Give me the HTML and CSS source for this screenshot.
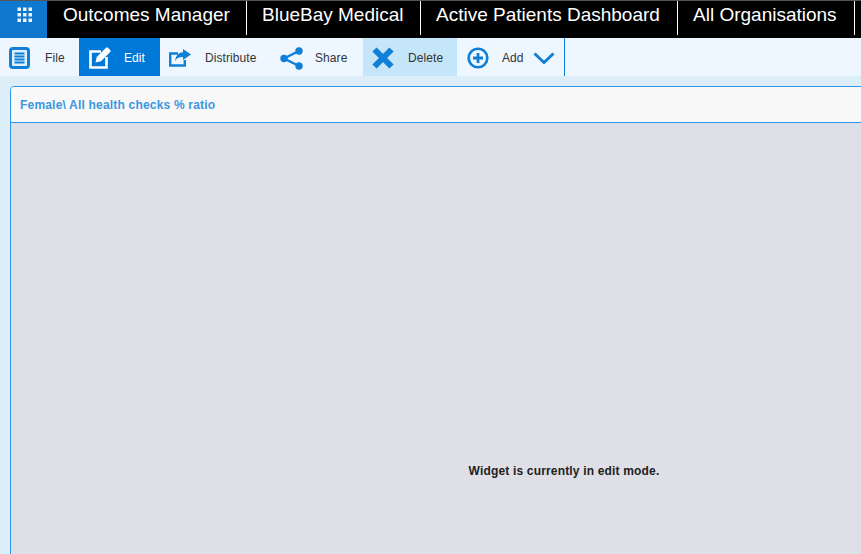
FILE: index.html
```html
<!DOCTYPE html>
<html lang="en">
<head>
<meta charset="utf-8">
<title>Outcomes Manager</title>
<link rel="stylesheet" href="styles.css">
</head>
<body>
<header class="topbar">
  <button class="apps" aria-label="Apps">
    <svg width="15" height="15" viewBox="0 0 15 15"><g fill="#fff" fill-opacity=".92"><rect x="0.500" y="0.500" width="3.500" height="3.500"/><rect x="6" y="0.500" width="3.500" height="3.500"/><rect x="11.500" y="0.500" width="3.500" height="3.500"/><rect x="0.500" y="6" width="3.500" height="3.500"/><rect x="6" y="6" width="3.500" height="3.500"/><rect x="11.500" y="6" width="3.500" height="3.500"/><rect x="0.500" y="11.500" width="3.500" height="3.500"/><rect x="6" y="11.500" width="3.500" height="3.500"/><rect x="11.500" y="11.500" width="3.500" height="3.500"/></g></svg>
  </button>
  <div class="crumb crumb-app">Outcomes Manager</div>
  <div class="crumb crumb-org">BlueBay Medical</div>
  <div class="crumb crumb-dash">Active Patients Dashboard</div>
  <div class="crumb crumb-all">All Organisations</div>
</header>
<nav class="toolbar">
  <div class="tool tool-file">
    <svg class="ico" width="21" height="22" viewBox="0 0 21 22"><rect x="1.500" y="1.500" width="18" height="19" rx="2.500" fill="#dff0fc" stroke="#0f7fd8" stroke-width="3"/><path d="M5.500 6.500h10M5.500 9.500h10M5.500 12.500h10M5.500 15.500h10" stroke="#0f7fd8" stroke-width="2"/></svg>
    <span>File</span>
  </div>
  <div class="tool tool-edit">
    <svg class="ico" width="22" height="22" viewBox="0 0 22 22"><path d="M12 4.500H1.500v16h16V10" fill="none" stroke="#fff" stroke-width="2.600"/><path d="M6.500 15.500l1.200-5.500L17 .8a1.500 1.500 0 0 1 2 0l2.200 2.200a1.500 1.500 0 0 1 0 2L12 14.300z" fill="#fff"/></svg>
    <span>Edit</span>
  </div>
  <div class="tool tool-dist">
    <svg class="ico" width="22" height="18" viewBox="0 0 22 18"><path d="M9 4.500H1.200v12h14.600V11" fill="none" stroke="#0f7fd8" stroke-width="2.400"/><path d="M14 0l8 5.500-8 5.500V8c-4 0-6.500 1-8 4.500C6.500 7 9.500 3.500 14 3.300z" fill="#0f7fd8"/></svg>
    <span>Distribute</span>
  </div>
  <div class="tool tool-share">
    <svg class="ico" width="23" height="23" viewBox="0 0 23 23"><path d="M19 4L4 11.500 19 19" fill="none" stroke="#0f7fd8" stroke-width="2.400"/><circle cx="19" cy="4" r="3.700" fill="#0f7fd8"/><circle cx="4" cy="11.500" r="3.700" fill="#0f7fd8"/><circle cx="19" cy="19" r="3.700" fill="#0f7fd8"/></svg>
    <span>Share</span>
  </div>
  <div class="tool tool-del">
    <svg class="ico" width="22" height="22" viewBox="0 0 22 22"><path d="M2.500 2.500l17 17M19.500 2.500l-17 17" stroke="#0f7fd8" stroke-width="6" fill="none"/></svg>
    <span>Delete</span>
  </div>
  <div class="tool tool-add">
    <svg class="ico" width="22" height="22" viewBox="0 0 22 22"><circle cx="11" cy="11" r="9.300" fill="none" stroke="#0f7fd8" stroke-width="2.600"/><path d="M11 6v10M6 11h10" stroke="#0f7fd8" stroke-width="2.800"/></svg>
    <span>Add</span>
    <svg class="chev" width="22" height="13" viewBox="0 0 22 13"><path d="M1.500 1.500L11 10.500 20.500 1.500" fill="none" stroke="#0f7fd8" stroke-width="3"/></svg>
  </div>
</nav>
<main class="content">
  <section class="card">
    <h2 class="card-head">Female\ All health checks % ratio</h2>
    <div class="card-body">Widget is currently in edit mode.</div>
  </section>
</main>
</body>
</html>
```

FILE: styles.css
```css
html, body {
  margin: 0;
  padding: 0;
  height: 100%;
  overflow: hidden;
  font-family: "Liberation Sans", Arial, sans-serif;
  background: #dceef7;
}
.topbar {
  display: flex;
  height: 37px;
  background: #000;
  border-top: 1px solid #555;
}
.apps {
  width: 47px;
  height: 37px;
  border: 0;
  padding: 6px 0 0 17px;
  background: #0e78cf;
  display: flex;
  justify-content: flex-start;
  align-items: flex-start;
  flex: none;
}
.crumb {
  height: 34px;
  line-height: 27px;
  color: #fff;
  font-size: 19px;
  border-right: 1px solid #fff;
  box-sizing: border-box;
  padding-left: 15px;
  white-space: nowrap;
  flex: none;
}
.crumb-app { width: 200px; padding-left: 16px; }
.crumb-org { width: 174px; }
.crumb-dash { width: 257px; }
.crumb-all { width: 177px; }
.toolbar {
  display: flex;
  height: 38px;
  background: #eef7ff;
}
.tool {
  display: flex;
  align-items: center;
  box-sizing: border-box;
  height: 38px;
  padding-top: 2px;
  font-size: 12px;
  letter-spacing: 0.08px;
  color: #333;
  flex: none;
}
.tool-file { width: 79px; padding-left: 9px; gap: 15px; }
.tool-edit { width: 81px; padding-left: 10px; gap: 13px; background: #0078d7; color: #fff; }
.tool-dist { width: 110px; padding-left: 9px; gap: 14px; }
.tool-share { width: 93px; padding-left: 10px; gap: 12px; }
.tool-del { width: 94px; padding-left: 9px; gap: 14px; background: #c5e6f8; }
.tool-add { width: 108px; padding-left: 10px; gap: 13px; border-right: 1px solid #0f7fd8; }
.chev { margin-left: -4px; }
.content {
  padding: 10px 0 0 10px;
}
.card {
  width: 1106px;
  height: 600px;
  border: 1px solid #2f96e8;
  border-radius: 4px 0 0 0;
  background: #dfdfe7;
}
.card-head {
  margin: 0;
  height: 35px;
  line-height: 37px;
  padding-left: 9px;
  font-size: 12px;
  font-weight: bold;
  letter-spacing: 0.19px;
  color: #3a96e0;
  background: #f8f8f8;
  border-bottom: 1px solid #2f96e8;
  border-radius: 3px 0 0 0;
}
.card-body {
  padding-top: 341px;
  text-align: center;
  font-size: 12px;
  font-weight: bold;
  color: #222;
  letter-spacing: 0.17px;
}
```
